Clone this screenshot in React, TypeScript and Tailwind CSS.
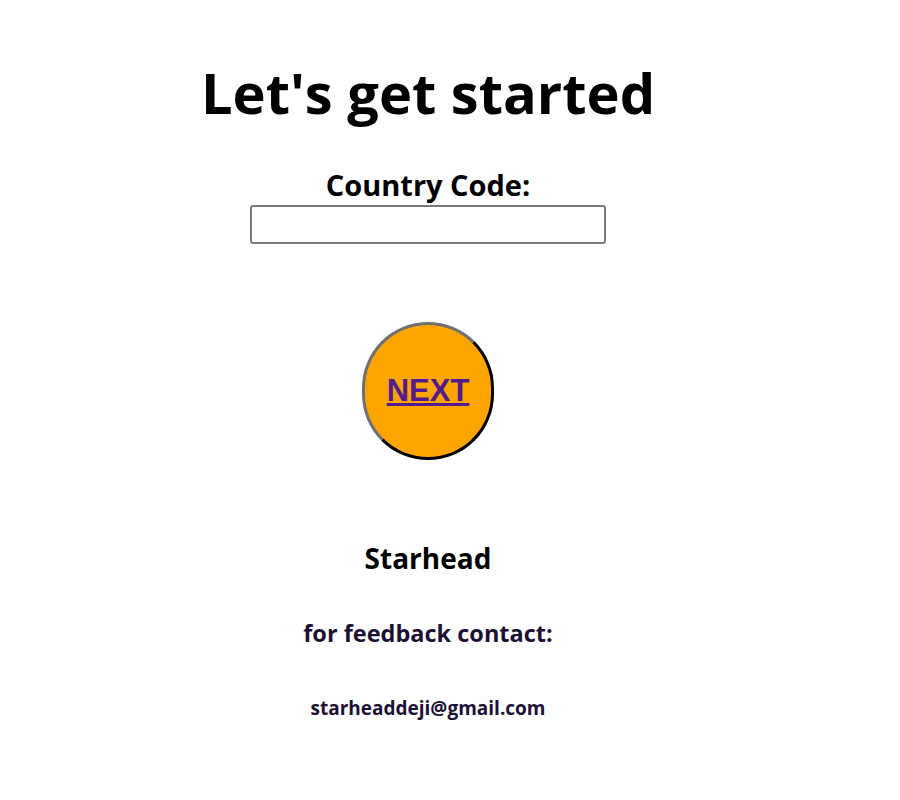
import React from 'react';

export default function App() {
  return (
    <div className="w-[856px] bg-white text-center text-black" style={{ fontFamily: '"Open Sans", "Noto Sans", sans-serif' }}>
      <h1 className="pt-[56px] text-[56px] font-bold leading-[72px]">Let's get started</h1>

      <div className="mt-[40px] flex flex-col items-center">
        <label className="text-[29px] font-bold leading-[34px]">Country Code:</label>
        <input
          type="text"
          className="mt-[3px] h-[39px] w-[356px] rounded-[3px] border-2 border-[#7a7a7a] outline-none"
        />
      </div>

      <div className="mt-[78px] flex justify-center">
        <button className="flex h-[138px] w-[132px] items-center justify-center rounded-full border-[3px] border-t-[#707070] border-l-[#707070] border-r-black border-b-black bg-[#ffa500]">
          <a
            href="#"
            className="text-[31px] font-bold text-[#551a8b] underline"
            style={{ fontFamily: '"Liberation Sans", Arial, sans-serif' }}
          >
            NEXT
          </a>
        </button>
      </div>

      <footer className="mt-[80px] flex flex-col items-center">
        <h2 className="text-[28px] font-bold leading-[36px]">Starhead</h2>
        <p className="mt-[42px] text-[23.5px] font-bold leading-[30px] text-[#1c1034]">for feedback contact:</p>
        <p className="mt-[48px] text-[19px] font-bold leading-[24px] text-[#1c1034]">starheaddeji@gmail.com</p>
      </footer>
    </div>
  );
}
